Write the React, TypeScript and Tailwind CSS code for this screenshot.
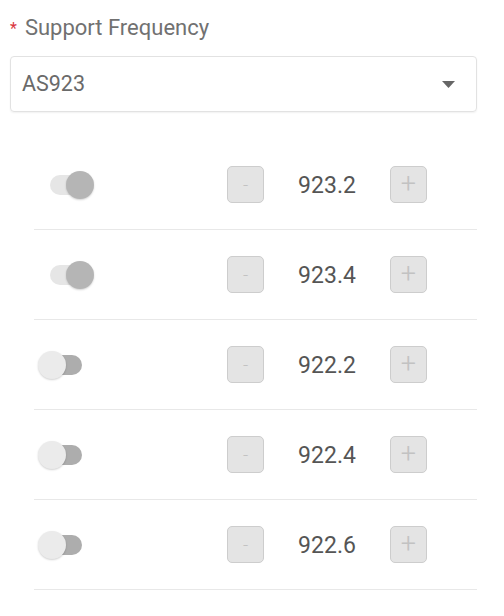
const channels = [
  { freq: '923.2', on: true },
  { freq: '923.4', on: true },
  { freq: '922.2', on: false },
  { freq: '922.4', on: false },
  { freq: '922.6', on: false },
];

function Toggle({ on }: { on: boolean }) {
  return (
    <div className="relative w-[56px] h-[28px]">
      <div
        className={`absolute left-[12px] top-[4px] w-[32px] h-[20px] rounded-full ${
          on ? 'bg-[#e6e6e6]' : 'bg-[#adadad]'
        }`}
      />
      <div
        className={`absolute top-0 w-[28px] h-[28px] rounded-full shadow-[0_1px_2px_rgba(0,0,0,0.18)] ${
          on ? 'left-[28px] bg-[#b5b5b5]' : 'left-0 bg-[#ebebeb]'
        }`}
      />
    </div>
  );
}

function StepButton({ label, big }: { label: string; big?: boolean }) {
  return (
    <button
      type="button"
      className={`w-[37px] h-[37px] flex items-center justify-center rounded-[5px] border border-[#cdcdcd] bg-[#e4e4e4] text-[#c2c2c2] font-light leading-none ${
        big ? 'text-[27px]' : 'text-[18px]'
      }`}
    >
      {label}
    </button>
  );
}

export default function App() {
  return (
    <div className="w-[504px] h-[616px] bg-white font-['Roboto',sans-serif] pl-[10px] pr-[27px]">
      <div className="pt-[14px] h-[56px] flex items-start">
        <span className="text-[#d9363e] text-[16px] leading-[30px] mr-[8px]">*</span>
        <span className="text-[#717171] text-[22px] leading-[28px]">Support Frequency</span>
      </div>

      <div className="h-[56px] flex items-center justify-between rounded-[4px] border border-[#e2e2e2] shadow-[0_1px_2px_rgba(0,0,0,0.06)] pl-[11px] pr-[21px]">
        <span className="text-[#6a6a6a] text-[21.5px]">AS923</span>
        <svg width="13" height="7" viewBox="0 0 13 7">
          <path d="M0 0 L13 0 L6.5 7 Z" fill="#666" />
        </svg>
      </div>

      <div className="mt-[28px] ml-[24px]">
        {channels.map(c => (
          <div key={c.freq} className="h-[90px] flex items-center border-b border-[#e8e8e8]">
            <div className="w-[193px] pl-[4px]">
              <Toggle on={c.on} />
            </div>
            <StepButton label="-" />
            <div className="w-[126px] pt-[4px] text-center text-[23px] text-[#555555]">{c.freq}</div>
            <StepButton label="+" big />
          </div>
        ))}
      </div>
    </div>
  );
}
